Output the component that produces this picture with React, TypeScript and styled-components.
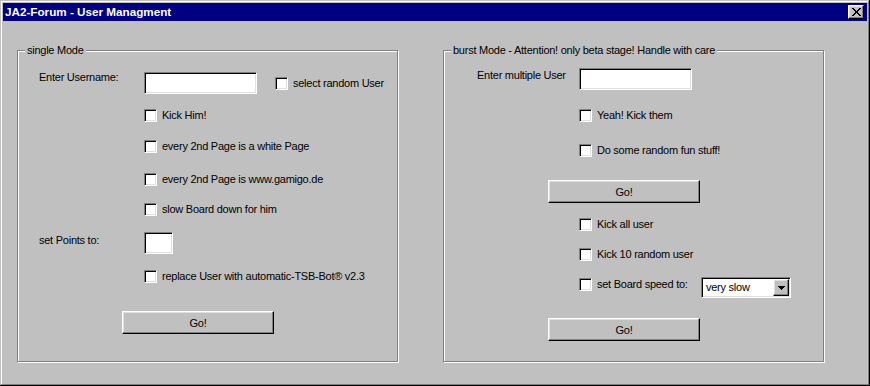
import React from "react";
import styled, { createGlobalStyle } from "styled-components";

const Global = createGlobalStyle`
  html, body { margin: 0; padding: 0; background: #c0c0c0; }
  body {
    font-family: "Liberation Sans", Arial, sans-serif;
    font-size: 11px;
    color: #000;
  }
  * { box-sizing: border-box; }
`;

const Window = styled.div`
  width: 870px;
  height: 386px;
  background: #c0c0c0;
  padding: 3px;
  display: flex;
  flex-direction: column;
  box-shadow: inset -1px -1px 0 #000, inset 1px 1px 0 #c0c0c0,
    inset -2px -2px 0 #808080, inset 2px 2px 0 #fff;
`;

const TitleBar = styled.div`
  height: 18px;
  flex: none;
  background: #000080;
  display: flex;
  align-items: center;
  justify-content: space-between;
  padding: 0 3px 0 2px;
`;

const Title = styled.span`
  color: #fff;
  font-weight: bold;
  font-size: 11.7px;
  line-height: 18px;
  white-space: nowrap;
`;

const raised = `
  border: 1px solid;
  border-color: #fff #000 #000 #fff;
  box-shadow: inset -1px -1px 0 #808080, inset 1px 1px 0 #dfdfdf;
  background: #c0c0c0;
`;

const sunken = `
  border: 1px solid;
  border-color: #808080 #fff #fff #808080;
  box-shadow: inset 1px 1px 0 #000, inset -1px -1px 0 #dfdfdf;
  background: #fff;
`;

const CloseButton = styled.button`
  ${raised}
  width: 16px;
  height: 14px;
  padding: 0 0 0 1px;
  margin: 0;
  display: flex;
  align-items: center;
  justify-content: center;
`;

const Body = styled.div`
  display: flex;
  gap: 45px;
  padding: 29px 0 0 14px;
`;

const Group = styled.div`
  position: relative;
  width: 381px;
  height: 312px;
  border: 1px solid #808080;
  box-shadow: 1px 1px 0 #fff, inset 1px 1px 0 #fff;
  display: flex;
  flex-direction: column;
  letter-spacing: -0.25px;
`;

const Legend = styled.span`
  position: absolute;
  top: -7px;
  left: 7px;
  padding: 0 2px;
  background: #c0c0c0;
  line-height: 13px;
  white-space: nowrap;
`;

const Row = styled.div<{ $mt: number; $pl: number; $align?: string }>`
  display: flex;
  align-items: ${(p) => p.$align ?? "center"};
  margin-top: ${(p) => p.$mt}px;
  padding-left: ${(p) => p.$pl}px;
`;

const FieldLabel = styled.span<{ $w: number; $dy: number }>`
  width: ${(p) => p.$w}px;
  flex: none;
  align-self: flex-start;
  margin-top: ${(p) => p.$dy}px;
  line-height: 13px;
  white-space: nowrap;
`;

const TextField = styled.input<{ $w: number }>`
  ${sunken}
  width: ${(p) => p.$w}px;
  height: 22px;
  padding: 0 3px;
  margin: 0;
  font: inherit;
  outline: none;
`;

const Check = styled.label<{ $ml?: number; $w?: number; $mt?: number }>`
  display: inline-flex;
  align-items: center;
  gap: 5px;
  line-height: 13px;
  white-space: nowrap;
  margin-left: ${(p) => p.$ml ?? 0}px;
  margin-top: ${(p) => p.$mt ?? 0}px;
  ${(p) => (p.$w ? `width: ${p.$w}px; flex: none;` : "")}
`;

const Box = styled.span`
  ${sunken}
  width: 13px;
  height: 13px;
  flex: none;
`;

const Button = styled.button<{ $w: number }>`
  ${raised}
  width: ${(p) => p.$w}px;
  height: 23px;
  margin: 0;
  padding: 0;
  font: inherit;
  letter-spacing: -0.25px;
  color: #000;
`;

const Select = styled.div`
  ${sunken}
  width: 90px;
  height: 21px;
  padding: 1px;
  display: flex;
  align-items: center;
`;

const SelectValue = styled.span`
  flex: 1;
  padding-left: 3px;
  line-height: 13px;
  white-space: nowrap;
`;

const DropButton = styled.span`
  ${raised}
  width: 16px;
  height: 17px;
  flex: none;
  display: flex;
  align-items: center;
  justify-content: center;
`;

const CloseGlyph = () => {
  const rows: [number, number][][] = [
    [[0, 2], [7, 2]],
    [[1, 2], [6, 2]],
    [[2, 2], [5, 2]],
    [[3, 3]],
    [[3, 3]],
    [[2, 2], [5, 2]],
    [[1, 2], [6, 2]],
    [[0, 2], [7, 2]],
  ];
  return (
    <svg width="9" height="8" viewBox="0 0 9 8" shapeRendering="crispEdges">
      {rows.map((segs, y) =>
        segs.map(([x, w], i) => <rect key={`${y}-${i}`} x={x} y={y} width={w} height={1} fill="#000" />)
      )}
    </svg>
  );
};

const DownArrow = () => (
  <svg width="7" height="4" viewBox="0 0 7 4" shapeRendering="crispEdges">
    <rect x="0" y="0" width="7" height="1" fill="#000" />
    <rect x="1" y="1" width="5" height="1" fill="#000" />
    <rect x="2" y="2" width="3" height="1" fill="#000" />
    <rect x="3" y="3" width="1" height="1" fill="#000" />
  </svg>
);

const CheckItem = ({ text, ml, w, mt }: { text: string; ml?: number; w?: number; mt?: number }) => (
  <Check $ml={ml} $w={w} $mt={mt}>
    <Box />
    <span>{text}</span>
  </Check>
);

export default function App() {
  return (
    <>
      <Global />
      <Window>
        <TitleBar>
          <Title>JA2-Forum - User Managment</Title>
          <CloseButton aria-label="close">
            <CloseGlyph />
          </CloseButton>
        </TitleBar>
        <Body>
          <Group>
            <Legend>single Mode</Legend>
            <Row $mt={21} $pl={21}>
              <FieldLabel $w={105} $dy={-1}>Enter Username:</FieldLabel>
              <TextField $w={113} />
              <CheckItem text="select random User" ml={18} />
            </Row>
            <Row $mt={15} $pl={126}>
              <CheckItem text="Kick Him!" />
            </Row>
            <Row $mt={18} $pl={126}>
              <CheckItem text="every 2nd Page is a white Page" />
            </Row>
            <Row $mt={20} $pl={126}>
              <CheckItem text="every 2nd Page is www.gamigo.de" />
            </Row>
            <Row $mt={17} $pl={126}>
              <CheckItem text="slow Board down for him" />
            </Row>
            <Row $mt={16} $pl={21}>
              <FieldLabel $w={105} $dy={2}>set Points to:</FieldLabel>
              <TextField $w={29} />
            </Row>
            <Row $mt={16} $pl={126}>
              <CheckItem text="replace User with automatic-TSB-Bot® v2.3" />
            </Row>
            <Row $mt={28} $pl={104}>
              <Button $w={152}>Go!</Button>
            </Row>
          </Group>
          <Group>
            <Legend>burst Mode - Attention! only beta stage! Handle with care</Legend>
            <Row $mt={17} $pl={33}>
              <FieldLabel $w={102} $dy={1}>Enter multiple User</FieldLabel>
              <TextField $w={113} />
            </Row>
            <Row $mt={19} $pl={135}>
              <CheckItem text="Yeah! Kick them" />
            </Row>
            <Row $mt={22} $pl={135}>
              <CheckItem text="Do some random fun stuff!" />
            </Row>
            <Row $mt={23} $pl={104}>
              <Button $w={152}>Go!</Button>
            </Row>
            <Row $mt={15} $pl={135}>
              <CheckItem text="Kick all user" />
            </Row>
            <Row $mt={17} $pl={135}>
              <CheckItem text="Kick 10 random user" />
            </Row>
            <Row $mt={16} $pl={135} $align="flex-start">
              <CheckItem text="set Board speed to:" w={122} mt={1} />
              <Select>
                <SelectValue>very slow</SelectValue>
                <DropButton>
                  <DownArrow />
                </DropButton>
              </Select>
            </Row>
            <Row $mt={20} $pl={104}>
              <Button $w={152}>Go!</Button>
            </Row>
          </Group>
        </Body>
      </Window>
    </>
  );
}
